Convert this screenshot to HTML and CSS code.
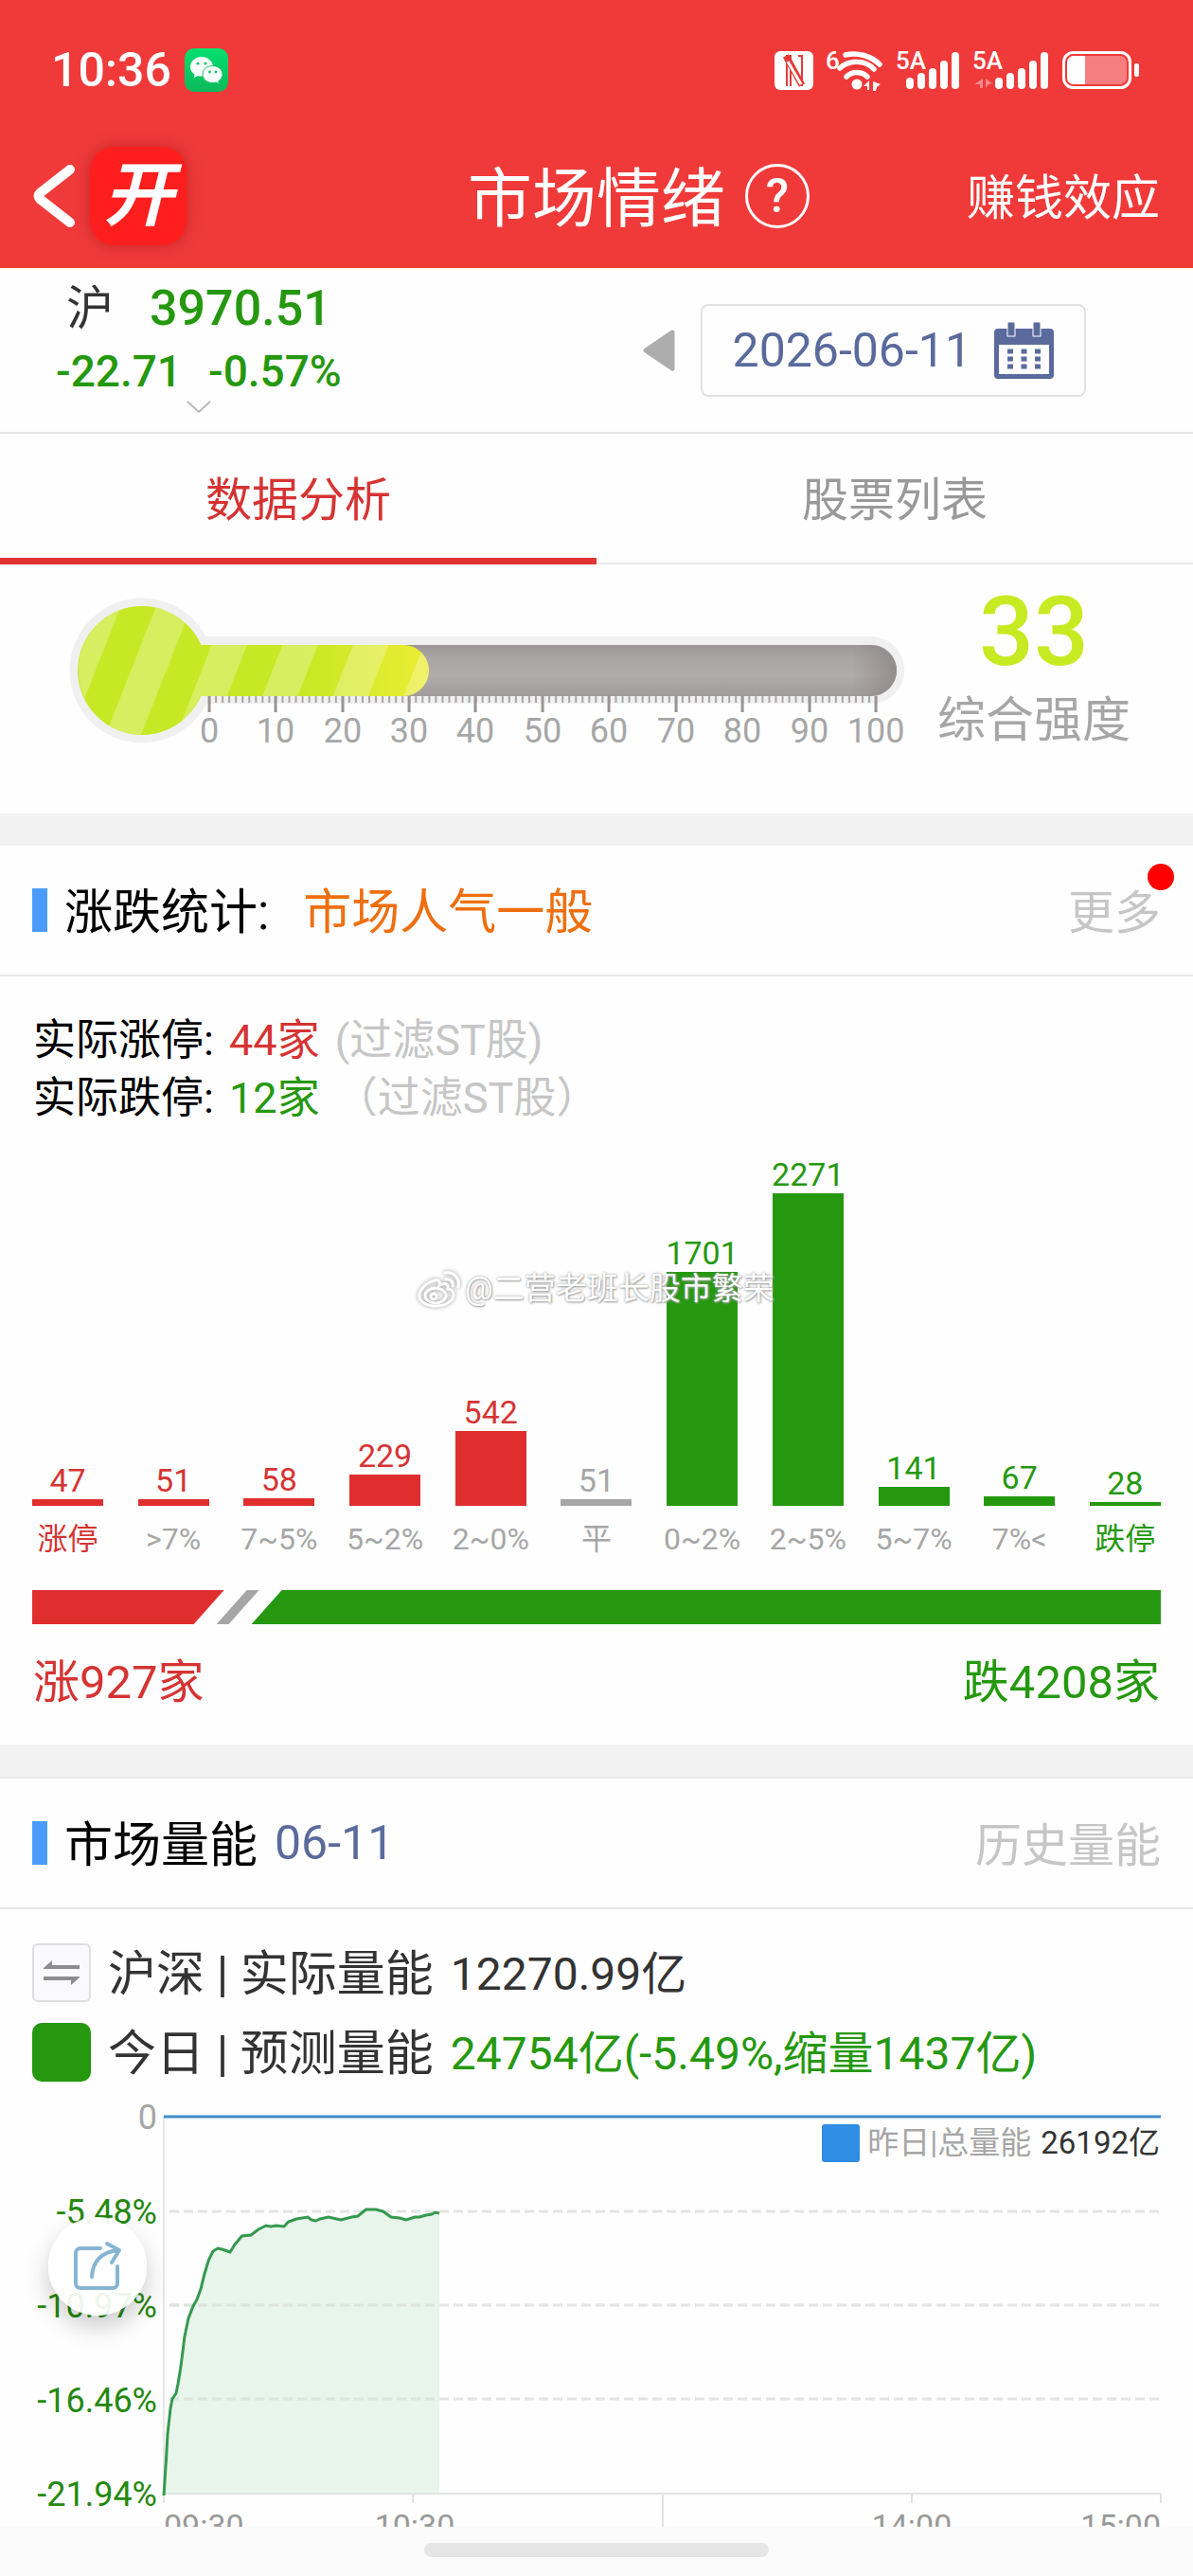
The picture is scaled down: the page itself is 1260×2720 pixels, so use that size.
FILE: index.html
```html
<!DOCTYPE html>
<html lang="zh-CN">
<head>
	<meta charset="UTF-8">
	<meta name="viewport" content="width=device-width, initial-scale=1">
	<title>市场情绪</title>
	<link rel="stylesheet" href="styles.css">
</head>
<body>
	<header class="top">
		<div class="status-bar">
			<span class="clock">10:36</span>
			<svg class="wechat" width="46" height="46" viewBox="0 0 46 46">
				<defs>
					<linearGradient id="wx" x1="0" y1="0" x2="0" y2="1"><stop offset="0" stop-color="#05e070"/><stop offset="1" stop-color="#0cb95a"/></linearGradient>
				</defs>
				<rect width="46" height="46" rx="10" fill="url(#wx)"/>
				<path d="M18 9c-6.600 0-12 4.700-12 10.500 0 3.400 1.800 6.300 4.600 8.200L9.800 31l4-2c1.300.4 2.700.6 4.200.6 6.600 0 12-4.500 12-10.100S24.600 9 18 9z" fill="#fff"/>
				<path d="M29.500 18.500c-6 0-10.500 4-10.500 9s4.500 9 10.500 9c1.300 0 2.500-.2 3.600-.5l3.400 1.700-.8-3c2.500-1.600 4.300-4.200 4.300-7.200 0-5-4.500-9-10.500-9z" fill="#fff" stroke="#08c863" stroke-width="1"/>
				<g fill="#08c863"><circle cx="14" cy="16" r="1.600"/><circle cx="22" cy="16" r="1.600"/><circle cx="26.500" cy="25" r="1.400"/><circle cx="33" cy="25" r="1.400"/></g>
			</svg>
			<svg class="signals" width="388" height="54" viewBox="0 -4 388 54" fill="#fff">
				<!-- nfc -->
				<rect x="0" y="3" width="41" height="41" rx="6"/>
				<path d="M13 40V8h4v32M25 8h4v32" fill="none" stroke="#e63a3a" stroke-width="2"/>
				<path d="M12 8l17 31" stroke="#e63a3a" stroke-width="7"/>
				<path d="M14 14l14 24" stroke="#fff" stroke-width="3"/>
				<!-- wifi -->
				<text x="54" y="22" class="sig-text">6</text>
				<g fill="none" stroke="#fff" stroke-width="5.500" stroke-linecap="round">
					<path d="M75 7c13-3 27 1 36 10"/>
					<path d="M69 21c10-9 27-9 36 1"/>
					<path d="M76 30c6-6 16-6 22 0"/>
				</g>
				<circle cx="87" cy="38" r="5.500"/>
				<path d="M100 34v10h-2v-4h-4zM104 45V35l8 3-4 3-1 4z"/>
				<!-- cell 1 -->
				<text x="128" y="22" class="sig-text">5A</text>
				<rect x="139" y="31" width="8" height="12" rx="4"/><rect x="151" y="26" width="8" height="17" rx="4"/><rect x="163" y="21" width="8" height="22" rx="4"/><rect x="175" y="13" width="8" height="30" rx="4"/><rect x="187" y="4" width="8" height="39" rx="4"/>
				<!-- cell 2 -->
				<text x="209" y="22" class="sig-text">5A</text>
				<path d="M220 32v10h-3v-4h-6zM223 42V32l7 5-4 1z" opacity=".4"/>
				<rect x="233" y="31" width="8" height="12" rx="4"/><rect x="245" y="26" width="8" height="17" rx="4"/><rect x="257" y="21" width="8" height="22" rx="4"/><rect x="269" y="13" width="8" height="30" rx="4"/><rect x="281" y="4" width="8" height="39" rx="4"/>
				<!-- battery -->
				<rect x="305.500" y="4.500" width="70" height="37" rx="10" fill="none" stroke="#fff" stroke-width="3"/>
				<rect x="309" y="8" width="63" height="30" rx="7" opacity=".35"/>
				<path d="M316 8h12v30h-12a7 7 0 0 1-7-7V15a7 7 0 0 1 7-7z"/>
				<rect x="380" y="16" width="5" height="14" rx="2"/>
			</svg>
		</div>
		<nav class="navbar">
			<div class="nav-left">
				<button class="back" type="button" aria-label="返回">
					<svg width="46" height="68" viewBox="0 0 46 68"><path d="M39 6L7 31q-3 3 0 6l32 25" fill="none" stroke="#fff" stroke-width="10" stroke-linecap="round" stroke-linejoin="round"/></svg>
				</button>
				<span class="logo">开</span>
			</div>
			<h1>市场情绪</h1>
			<div class="nav-right">
				<button class="help" type="button">?</button>
				<a href="#">赚钱效应</a>
			</div>
		</nav>
	</header>

	<main>
		<section class="quote">
			<button class="index-box" type="button">
				<span class="index-line"><span class="index-name">沪</span><span class="index-value">3970.51</span></span>
				<span class="index-change"><span>-22.71</span><span>-0.57%</span></span>
				<svg width="26" height="14" viewBox="0 0 26 14"><path d="M1 1l12 11L25 1" fill="none" stroke="#b8b8b8" stroke-width="2"/></svg>
			</button>
			<div class="date-picker">
				<button class="prev-day" type="button" aria-label="前一天">
					<svg width="34" height="44" viewBox="0 0 34 44"><path d="M31 3L3 22l28 19z" fill="#adadad" stroke="#adadad" stroke-width="5" stroke-linejoin="round"/></svg>
				</button>
				<button class="date" type="button">
					<time datetime="2026-06-11">2026-06-11</time>
					<svg width="63" height="60" viewBox="0 0 63 60">
						<rect x="0" y="7" width="63" height="53" rx="4" fill="#5a6a9c"/>
						<rect x="5" y="24" width="53" height="31" fill="#fff"/>
						<g fill="#5a6a9c" stroke="#fff" stroke-width="1"><rect x="14" y="0" width="8" height="15"/><rect x="41" y="0" width="8" height="15"/></g>
						<path d="M14 31h35M14 39h35M14 47h35" stroke="#5a6a9c" stroke-width="5" stroke-dasharray="6 8.500"/>
					</svg>
				</button>
			</div>
		</section>

		<div class="tabs">
			<button class="tab active" type="button">数据分析</button>
			<button class="tab" type="button">股票列表</button>
		</div>

		<section class="gauge">
			<svg class="thermo" viewBox="0 0 960 200">
				<defs>
					<linearGradient id="tube" x1="0" y1="0" x2="0" y2="1"><stop offset="0" stop-color="#9b9898"/><stop offset=".25" stop-color="#a9a5a4"/><stop offset=".6" stop-color="#b0acab"/><stop offset="1" stop-color="#a09b9b"/></linearGradient>
					<linearGradient id="tubeEnd" x1="0" y1="0" x2="1" y2="0"><stop offset="0" stop-color="#8c8685" stop-opacity="0"/><stop offset="1" stop-color="#8c8685" stop-opacity=".8"/></linearGradient>
					<linearGradient id="fill" gradientUnits="userSpaceOnUse" x1="320" y1="0" x2="440" y2="0"><stop offset="0" stop-color="#c7e824"/><stop offset="1" stop-color="#e8ec32"/></linearGradient>
					<pattern id="stripes" x="257" y="0" width="74.700" height="200" patternUnits="userSpaceOnUse" patternTransform="skewX(-21.500)"><rect width="37.400" height="200" fill="#fff" opacity=".27"/></pattern>
				</defs>
				<g fill="#f0f0f1"><circle cx="150" cy="112" r="76.500"/><rect x="150" y="76" width="805" height="71" rx="35"/></g>
				<rect x="200" y="85" width="747" height="54" rx="27" fill="url(#tube)"/>
				<path d="M900 85h20a27 27 0 0 1 0 54h-20z" fill="url(#tubeEnd)"/>
				<g fill="url(#fill)"><circle cx="150" cy="112" r="68"/><rect x="150" y="85" width="303" height="54" rx="27"/></g>
				<path d="M213 85a68 68 0 1 0 0 54h213a27 27 0 0 0 0-54z" fill="url(#stripes)"/>
				<path d="M220 142.500h706" stroke="#aaa6a5" stroke-width="7" stroke-dasharray="2 5.040"/>
				<path d="M221 139v17M291 139v17M362 139v17M432 139v17M502 139v17M573 139v17M643 139v17M714 139v17M784 139v17M855 139v17M925 139v17" stroke="#999493" stroke-width="3"/>
				<g class="scale-text">
					<text x="221" y="188">0</text><text x="291" y="188">10</text><text x="362" y="188">20</text><text x="432" y="188">30</text><text x="502" y="188">40</text><text x="573" y="188">50</text><text x="643" y="188">60</text><text x="714" y="188">70</text><text x="784" y="188">80</text><text x="855" y="188">90</text><text x="925" y="188">100</text>
				</g>
			</svg>
			<div class="score">
				<strong>33</strong>
				<span>综合强度</span>
			</div>
		</section>

		<section class="card">
			<div class="card-head">
				<h2>涨跌统计:</h2>
				<span class="mood">市场人气一般</span>
				<a class="more" href="#">更多<i class="dot"></i></a>
			</div>
			<div class="stats">
				<p>实际涨停: <span class="up">44家</span> <span class="note">(过滤ST股)</span></p>
				<p>实际跌停: <span class="down">12家</span> <span class="note">（过滤ST股）</span></p>
			</div>
			<div class="bars">
				<div class="col up"><b>47</b><i style="height:7px"></i><span>涨停</span></div>
				<div class="col up mid"><b>51</b><i style="height:7px"></i><span>&gt;7%</span></div>
				<div class="col up mid"><b>58</b><i style="height:8px"></i><span>7~5%</span></div>
				<div class="col up mid"><b>229</b><i style="height:33px"></i><span>5~2%</span></div>
				<div class="col up mid"><b>542</b><i style="height:79px"></i><span>2~0%</span></div>
				<div class="col flat"><b>51</b><i style="height:7px"></i><span>平</span></div>
				<div class="col down mid"><b>1701</b><i style="height:247px"></i><span>0~2%</span></div>
				<div class="col down mid"><b>2271</b><i style="height:330px"></i><span>2~5%</span></div>
				<div class="col down mid"><b>141</b><i style="height:20px"></i><span>5~7%</span></div>
				<div class="col down mid"><b>67</b><i style="height:10px"></i><span>7%&lt;</span></div>
				<div class="col down"><b>28</b><i style="height:4px"></i><span>跌停</span></div>
				<div class="watermark">
					<svg width="46" height="40" viewBox="0 0 46 40" fill="none" stroke="#fff" stroke-width="3" stroke-linecap="round">
						<path d="M18 11C9 13 2 21 2 27c0 7 8 11 17 11 11 0 19-6 19-12 0-4-3-6-6-6 1-5-2-7-9-4 1-4-1-6-5-5z"/>
						<ellipse cx="19" cy="27" rx="11" ry="8"/><circle cx="17" cy="28" r="3"/>
						<path d="M30 10c5-1 8 3 7 7M29 3c9-2 16 6 14 15"/>
					</svg>
					<span>@二营老班长股市繁荣</span>
				</div>
			</div>
			<div class="ratio">
				<i class="ratio-up" style="width:17%"></i>
				<i class="ratio-flat"></i>
				<i class="ratio-down"></i>
			</div>
			<div class="totals">
				<span class="up">涨927家</span>
				<span class="down">跌4208家</span>
			</div>
		</section>

		<section class="card volume">
			<div class="card-head">
				<h2>市场量能</h2>
				<span class="day">06-11</span>
				<a class="more" href="#">历史量能</a>
			</div>
			<div class="amounts">
				<div class="amount">
					<button class="swap" type="button" aria-label="切换">
						<svg width="40" height="28" viewBox="0 0 40 28" fill="#8d8d91"><path d="M1 9L10 1v5h29v4H1zM39 19l-9 8v-5H1v-4h38z"/></svg>
					</button>
					<span>沪深 | 实际量能</span>
					<span class="num">12270.99亿</span>
				</div>
				<div class="amount">
					<i class="swatch"></i>
					<span>今日 | 预测量能</span>
					<span class="num down">24754亿(-5.49%,缩量1437亿)</span>
				</div>
			</div>
			<div class="chart">
				<svg viewBox="0 0 1260 500">
					<path d="M173 15v408" stroke="#e6e6e6" stroke-width="2"/>
					<path d="M179 115h1047M179 214h1047M179 313h1047" stroke="#e4e4e4" stroke-width="3" stroke-dasharray="10 5"/>
					<path d="M173 415L175.500 377 177 350 180 323 182 313 186 307 188 297 190.500 282 192.500 267 195 247 199 228 204 215 208 208 212 197 216 181 220.500 166 225 157 230 154 234.500 155 243 158 248 150 255.500 141 265 140 273 134 281 130 286 131 292 130 300 131 304.500 126 313 123 325 121 329 124 333.500 125 338 123 347 121 360 124 371.500 121 378 120 386.500 113 397 113 404.500 115 413 121 422 122 429 124 438 121 443 121 450 119 456 118 460 116 464 117V413H173z" fill="#e8f5eb"/>
					<path d="M179 214h285M179 313h285" stroke="#dbe5dd" stroke-width="3" stroke-dasharray="10 5"/>
					<path d="M173 413h1053M436 413v10M700 413v45M963 413v10M1226 413v10" fill="none" stroke="#e2e2e2" stroke-width="2"/>
					<path d="M173 415L175.500 377 177 350 180 323 182 313 186 307 188 297 190.500 282 192.500 267 195 247 199 228 204 215 208 208 212 197 216 181 220.500 166 225 157 230 154 234.500 155 243 158 248 150 255.500 141 265 140 273 134 281 130 286 131 292 130 300 131 304.500 126 313 123 325 121 329 124 333.500 125 338 123 347 121 360 124 371.500 121 378 120 386.500 113 397 113 404.500 115 413 121 422 122 429 124 438 121 443 121 450 119 456 118 460 116 464 117" fill="none" stroke="#35994e" stroke-width="3"/>
					<path d="M173 15h1053" stroke="#3d8ccc" stroke-width="3"/>
					<g class="y-text">
						<text x="166" y="28" class="zero">0</text>
						<text x="166" y="128">-5.48%</text>
						<text x="166" y="227">-10.97%</text>
						<text x="166" y="327">-16.46%</text>
						<text x="166" y="426">-21.94%</text>
					</g>
					<g class="x-text">
						<text x="173" y="459" class="start">09:30</text>
						<text x="438" y="459">10:30</text>
						<text x="963" y="459">14:00</text>
						<text x="1226" y="459" class="end">15:00</text>
					</g>
				</svg>
				<div class="legend"><i></i><span>昨日|总量能</span><em>26192亿</em></div>
			</div>
		</section>
	</main>

	<button class="share" type="button" aria-label="分享">
		<svg width="52" height="54" viewBox="0 0 52 54" fill="none" stroke="#86b5d3" stroke-width="4" stroke-linecap="round" stroke-linejoin="round"><path d="M29 8H8a5 5 0 0 0-5 5v32a5 5 0 0 0 5 5h34a5 5 0 0 0 5-5V27"/><path d="M20 38c1-16 9-26 28-28M36 3l13 7-8 13"/></svg>
	</button>
	<div class="home-bar"><i></i></div>
</body>
</html>
```
FILE: styles.css
```css
* {
	box-sizing: border-box;
}

body {
	margin: 0;
	background: #fefefe;
	color: #333;
	font-family: Roboto, "Noto Sans CJK SC", sans-serif;
	font-size: 49px;
}

h1, h2, p {
	margin: 0;
	font-weight: 400;
}

button {
	padding: 0;
	border: none;
	background: none;
	color: inherit;
	font: inherit;
	cursor: pointer;
}

a {
	color: inherit;
	text-decoration: none;
}

i, em {
	font-style: normal;
}

svg {
	display: block;
	flex-shrink: 0;
}

.up {
	color: #d63333;
}

.down {
	color: #25980f;
}

/* header */
.top {
	background: #f03a3a;
	color: #fff;
}

.status-bar {
	display: flex;
	align-items: center;
	gap: 14px;
	height: 130px;
	padding: 18px 54px 0;
}

.clock {
	font-size: 50px;
	font-weight: 500;
}

.signals {
	margin-left: auto;
}

.sig-text {
	font-size: 26px;
	font-weight: 500;
}

.navbar {
	display: grid;
	grid-template-columns: 1fr auto 1fr;
	align-items: center;
	height: 153px;
	padding: 0 35px;
}

.nav-left, .nav-right {
	display: flex;
	align-items: center;
}

.nav-left {
	gap: 14px;
}

.nav-right {
	justify-content: space-between;
	padding-left: 21px;
	font-size: 51px;
}

.nav-right a, .navbar h1 {
	padding-bottom: 4px;
}

.logo {
	width: 102px;
	height: 104px;
	border-radius: 26px;
	background: #ff1e1e;
	box-shadow: 0 0 16px rgba(120, 0, 0, 0.35);
	font-size: 74px;
	font-style: italic;
	font-weight: 700;
	line-height: 104px;
	text-align: center;
}

.navbar h1 {
	font-size: 68px;
}

.help {
	width: 68px;
	height: 68px;
	border: 3px solid #fff;
	border-radius: 50%;
	font-size: 50px;
	font-weight: 500;
	line-height: 60px;
}

/* index + date */
.quote {
	display: flex;
	justify-content: space-between;
	height: 175px;
	padding: 8px 113px 8px 59px;
	border-bottom: 2px solid #e8e8e8;
}

.index-box {
	display: flex;
	flex-direction: column;
	align-items: center;
	color: #25980f;
	font-weight: 500;
}

.index-line, .index-change {
	display: flex;
}

.index-line {
	gap: 38px;
	font-size: 52px;
	line-height: 70px;
}

.index-name {
	color: #333;
	font-size: 50px;
	font-weight: 400;
}

.index-change {
	gap: 28px;
	font-size: 46px;
	line-height: 62px;
}

.date-picker {
	display: flex;
	align-items: center;
	gap: 27px;
}

.date {
	display: flex;
	align-items: center;
	gap: 24px;
	height: 98px;
	padding: 0 32px;
	border: 2px solid #e2e2e2;
	border-radius: 8px;
	color: #5a6a9c;
	font-size: 50px;
}

.tabs {
	display: flex;
	height: 138px;
	border-bottom: 2px solid #e8e8e8;
}

.tab {
	flex: 1;
	margin-bottom: -2px;
	border-bottom: 7px solid transparent;
	color: #999;
}

.tab.active {
	border-bottom-color: #e03434;
	color: #d63333;
}

/* thermometer */
.gauge {
	display: flex;
	padding-bottom: 63px;
}

.thermo {
	width: 76.2%;
}

.scale-text {
	fill: #a6a6a6;
	font-size: 36px;
	text-anchor: middle;
}

.score {
	display: flex;
	flex: 1;
	flex-direction: column;
	align-items: center;
	gap: 14px;
	padding: 26px 36px 0 0;
	white-space: nowrap;
}

.score strong {
	color: #c7ea22;
	font-size: 102px;
	font-weight: 500;
	line-height: 90px;
}

.score span {
	color: #a6a6a6;
	font-size: 51px;
	line-height: 70px;
}

/* cards */
.card {
	border-top: 34px solid #f2f2f2;
}

.card-head {
	display: flex;
	align-items: center;
	height: 138px;
	padding: 0 34px;
	border-bottom: 2px solid #e8e8e8;
}

.volume .card-head {
	height: 140px;
	border-top: 2px solid #e8e8e8;
}

.card-head::before {
	content: "";
	width: 16px;
	height: 46px;
	margin-right: 18px;
	background: #4a9cfa;
}

.card-head h2, .mood, .more {
	padding-bottom: 4px;
}

.card-head h2 {
	color: #000;
	font-size: 51px;
}

.mood {
	margin-left: 36px;
	color: #ee6f10;
	font-size: 51px;
}

.day {
	margin-left: 18px;
	color: #5a6a9c;
	font-size: 50px;
}

.more {
	position: relative;
	margin-left: auto;
	color: #c6c6c6;
}

.dot {
	position: absolute;
	top: -12px;
	right: -14px;
	width: 28px;
	height: 28px;
	border-radius: 50%;
	background: #f00;
}

.stats {
	padding: 37px 35px 0;
	color: #000;
	font-size: 45px;
	line-height: 61px;
}

.stats .up, .stats .down {
	margin: 0 5px;
}

.note {
	color: #c6c6c6;
}

.bars {
	position: relative;
	display: flex;
	align-items: flex-end;
	justify-content: space-between;
	height: 455px;
	padding: 0 34px;
}

.col {
	display: flex;
	flex-direction: column;
	align-items: center;
	width: 75px;
	font-size: 32px;
	line-height: 40px;
	white-space: nowrap;
}

.col b {
	font-size: 34px;
	font-weight: 400;
}

.col i {
	align-self: stretch;
	margin-bottom: 15px;
	background: #e02e2e;
}

.col.down i {
	background: #25980f;
}

.col.flat i {
	background: #a6a6a6;
}

.col.flat, .col.mid span {
	color: #a6a6a6;
}

.watermark {
	position: absolute;
	top: 147px;
	left: 35%;
	display: flex;
	align-items: center;
	gap: 4px;
	color: #fff;
	font-size: 33px;
	line-height: 48px;
	text-shadow: 0 0 3px #999, 1px 1px 2px #aaa;
	white-space: nowrap;
}

.watermark svg {
	filter: drop-shadow(0 0 2px #999);
}

.ratio {
	display: flex;
	height: 36px;
	margin: 34px 34px 32px;
}

.ratio-up {
	background: #e02e2e;
	clip-path: polygon(0 0, 100% 0, calc(100% - 32px) 100%, 0 100%);
}

.ratio-flat {
	width: 45px;
	margin: 0 -8px;
	background: #a6a6a6;
	clip-path: polygon(32px 0, 100% 0, 13px 100%, 0 100%);
}

.ratio-down {
	flex: 1;
	background: #25980f;
	clip-path: polygon(32px 0, 100% 0, 100% 100%, 0 100%);
}

.totals {
	display: flex;
	justify-content: space-between;
	padding: 0 35px 35px;
	line-height: 60px;
}

/* volume */
.amounts {
	display: flex;
	flex-direction: column;
	gap: 22px;
	padding: 36px 34px 22px;
	font-size: 51px;
	line-height: 66px;
}

.amount {
	display: flex;
	height: 62px;
	white-space: nowrap;
}

.swap, .swatch {
	display: flex;
	align-items: center;
	justify-content: center;
	width: 62px;
	height: 62px;
	margin-right: 18px;
	border-radius: 6px;
}

.swap {
	border: 2px solid #dedee2;
	background: #f9f9fe;
}

.swatch {
	border-radius: 10px;
	background: #25980f;
}

.num {
	margin-left: 18px;
	font-size: 48px;
}

.chart {
	position: relative;
}

.y-text {
	fill: #25880f;
	font-size: 36px;
	text-anchor: end;
}

.x-text {
	fill: #999;
	font-size: 34px;
	text-anchor: middle;
}

.zero {
	fill: #a6a6a6;
}

.start {
	text-anchor: start;
}

.end {
	text-anchor: end;
}

.legend {
	position: absolute;
	top: 23px;
	right: 35px;
	display: flex;
	align-items: center;
	font-size: 33px;
	line-height: 40px;
}

.legend i {
	width: 40px;
	height: 40px;
	margin-right: 8px;
	border-radius: 3px;
	background: #2f8de4;
}

.legend span {
	color: #a6a6a6;
}

.legend em {
	margin-left: 10px;
}

.share {
	position: fixed;
	bottom: 275px;
	left: 51px;
	display: flex;
	align-items: center;
	justify-content: center;
	width: 104px;
	height: 104px;
	border-radius: 50%;
	background: rgba(255, 255, 255, 0.92);
	box-shadow: 0 12px 26px rgba(0, 0, 0, 0.2);
}

.home-bar {
	position: fixed;
	right: 0;
	bottom: 0;
	left: 0;
	height: 52px;
	padding-top: 17px;
	background: #fbfbfb;
}

.home-bar i {
	display: block;
	width: 364px;
	height: 15px;
	margin: 0 auto;
	border-radius: 8px;
	background: #e6e6e6;
}
```
